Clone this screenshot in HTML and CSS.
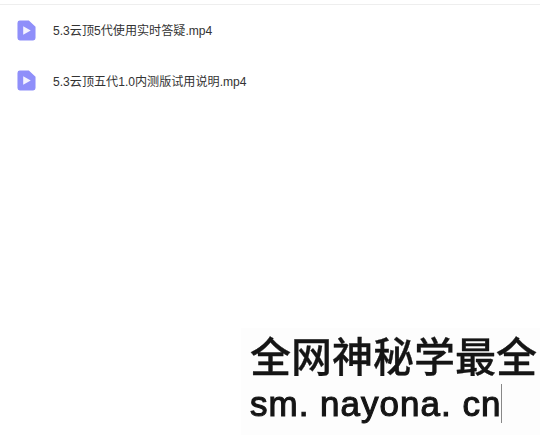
FILE: index.html
```html
<!DOCTYPE html>
<html lang="zh-CN">
<head>
  <meta charset="UTF-8">
  <title>5.3云顶</title>
  <link rel="stylesheet" href="styles.css">
</head>
<body>

  <!-- file list -->
  <div class="lista">
    <div class="fila">
      <svg class="icono" viewBox="0 0 20 22"><path d="M3 0.5H12.5L19.5 7V19A2.5 2.5 0 0 1 17 21.5H3A2.5 2.5 0 0 1 .5 19V3A2.5 2.5 0 0 1 3 .5Z" fill="#8f8ffa"/><path d="M6.5 6.5L14.5 11L6.5 15.5Z" fill="#f4f3ff"/></svg>
      <span class="nombre">5.3云顶5代使用实时答疑.mp4</span>
    </div>
    <div class="fila">
      <svg class="icono" viewBox="0 0 20 22"><path d="M3 0.5H12.5L19.5 7V19A2.5 2.5 0 0 1 17 21.5H3A2.5 2.5 0 0 1 .5 19V3A2.5 2.5 0 0 1 3 .5Z" fill="#8f8ffa"/><path d="M6.5 6.5L14.5 11L6.5 15.5Z" fill="#f4f3ff"/></svg>
      <span class="nombre">5.3云顶五代1.0内测版试用说明.mp4</span>
    </div>
  </div>

  <!-- watermark -->
  <div class="marca">
    <div class="marca-titulo">全网神秘学最全</div>
    <div class="marca-url"><span class="cursor">sm. nayona. cn</span></div>
  </div>

</body>
</html>
```

FILE: styles.css
```css
body {
  margin: 0;
  height: 435px;
  overflow: hidden;
  background-color: #fff;
  font-family: "Noto Sans CJK SC", "Liberation Sans", sans-serif;
  display: flex;
  flex-direction: column;
}

.lista {
  margin-top: 4px;
  border-top: 1px solid #eeeeee;
}

.fila {
  display: flex;
  align-items: center;
  gap: 17px;
  height: 50.5px;
  padding-left: 17px;
}

.icono {
  width: 19px;
  height: 21px;
}

.nombre {
  font-family: "Liberation Sans", "Noto Sans CJK SC", sans-serif;
  font-size: 12.1px;
  color: #333;
  padding-bottom: 1px;
}

.marca {
  margin-top: auto;
  margin-left: 241px;
  padding: 0 0 8px 9px;
  color: #151515;
  background-color: #fdfdfd;
  filter: blur(0.7px);
}

.marca-titulo {
  font-size: 41px;
  font-weight: 500;
  line-height: 52px;
  white-space: nowrap;
  -webkit-text-stroke: 0.3px #151515;
}

.marca-url {
  font-family: "Liberation Sans", sans-serif;
  font-size: 35px;
  line-height: 47px;
  letter-spacing: 1px;
  white-space: nowrap;
  -webkit-text-stroke: 1.1px #151515;
}

.cursor {
  border-right: 1px solid #888;
}
```
